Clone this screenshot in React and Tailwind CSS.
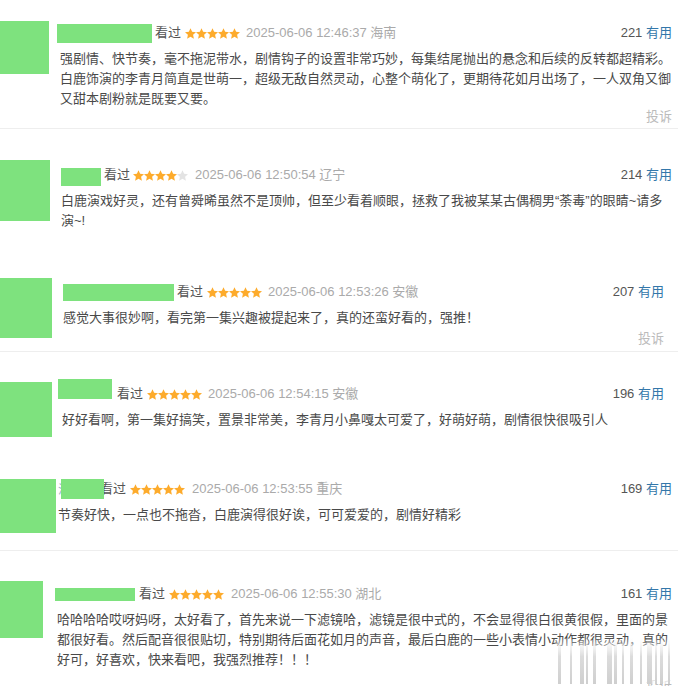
const comments = [
  {
    h: "h-[150px]",
    avatar: "mt-[21px] w-[49px] h-[53px]",
    col: "ml-[8px] mt-[23px] pr-[6px]",
    box: "w-[95px] h-[19px]",
    look: "ml-[3px]",
    starMl: "ml-[4px]",
    dateMl: "ml-[6px]",
    n: 5,
    date: "2025-06-06 12:46:37 海南",
    count: "221",
    bodyPl: "pl-[3px]",
    lines: [
      "强剧情、快节奏，毫不拖泥带水，剧情钩子的设置非常巧妙，每集结尾抛出的悬念和后续的反转都超精彩。",
      "白鹿饰演的李青月简直是世萌一，超级无敌自然灵动，心整个萌化了，更期待花如月出场了，一人双角又御",
      "又甜本剧粉就是既要又要。",
    ],
    report: "mt-0",
    sep: "mb-[21px]",
  },
  {
    h: "h-[118px]",
    avatar: "mt-[10px] w-[50px] h-[61px]",
    col: "ml-[11px] mt-[15px] pr-[6px]",
    box: "w-[40px] h-[18px] top-[2px]",
    look: "ml-[3px]",
    starMl: "ml-[3px]",
    dateMl: "ml-[7px]",
    n: 4,
    date: "2025-06-06 12:50:54 辽宁",
    count: "214",
    bodyPl: "pl-0",
    lines: [
      "白鹿演戏好灵，还有曾舜晞虽然不是顶帅，但至少看着顺眼，拯救了我被某某古偶稠男“荼毒”的眼睛~请多",
      "演~!",
    ],
  },
  {
    h: "h-[94px]",
    avatar: "mt-[10px] w-[52px] h-[60px]",
    col: "ml-[11px] mt-[14px] pr-[14px]",
    box: "w-[111px] h-[17px]",
    look: "ml-[3px]",
    starMl: "ml-[4px]",
    dateMl: "ml-[6px]",
    n: 5,
    date: "2025-06-06 12:53:26 安徽",
    count: "207",
    bodyPl: "pl-0",
    lines: ["感觉大事很妙啊，看完第一集兴趣被提起来了，真的还蛮好看的，强推！"],
    report: "mt-[3px]",
    sep: "mb-[10px]",
  },
  {
    h: "h-[104px]",
    avatar: "mt-[20px] w-[52px] h-[55px]",
    col: "ml-[6px] mt-[22px] pr-[14px]",
    box: "w-[54px] h-[20px] -top-[5px]",
    look: "ml-[5px]",
    starMl: "ml-[4px]",
    dateMl: "ml-[6px]",
    n: 5,
    date: "2025-06-06 12:54:15 安徽",
    count: "196",
    bodyPl: "pl-[4px]",
    lines: ["好好看啊，第一集好搞笑，置景非常美，李青月小鼻嘎太可爱了，好萌好萌，剧情很快很吸引人"],
  },
  {
    h: "h-[102px]",
    avatar: "mt-[13px] w-[56px] h-[54px]",
    col: "ml-[2px] mt-[13px] pr-[6px]",
    pre: true,
    box: "w-[43px] h-[20px]",
    look: "-ml-[4px]",
    starMl: "ml-[4px]",
    dateMl: "ml-[7px]",
    n: 5,
    date: "2025-06-06 12:53:55 重庆",
    count: "169",
    bodyPl: "pl-0",
    lines: ["节奏好快，一点也不拖沓，白鹿演得很好诶，可可爱爱的，剧情好精彩"],
    sep: "mb-[17px]",
  },
  {
    h: "h-[118px]",
    avatar: "mt-[13px] w-[43px] h-[57px]",
    col: "ml-[12px] mt-[16px] pr-[6px]",
    box: "w-[80px] h-[13px]",
    look: "ml-[4px]",
    starMl: "ml-[4px]",
    dateMl: "ml-[7px]",
    n: 5,
    date: "2025-06-06 12:55:30 湖北",
    count: "161",
    bodyPl: "pl-[2px]",
    lines: [
      "哈哈哈哈哎呀妈呀，太好看了，首先来说一下滤镜哈，滤镜是很中式的，不会显得很白很黄很假，里面的景",
      "都很好看。然后配音很很贴切，特别期待后面花如月的声音，最后白鹿的一些小表情小动作都很灵动，真的",
      "好可，好喜欢，快来看吧，我强烈推荐！！！",
    ],
    report: "mt-[9px]",
    mark: true,
  },
];

const starPath = "M12 1.8l3 6.6 7.2.8-5.4 4.9 1.5 7.1L12 17.6l-6.3 3.6 1.5-7.1L1.8 9.2 9 8.4z";

function Stars({ n, cls }) {
  return (
    <span className={`flex ${cls}`}>
      {[0, 1, 2, 3, 4].map((i) => (
        <svg key={i} width="11" height="11" viewBox="1.8 1.6 20.4 20">
          <path d={starPath} fill={i < n ? "#fdab2c" : "#e3e3e3"} />
        </svg>
      ))}
    </span>
  );
}

// washed-out stripes over the corner of the last comment
const bars = [[2, 3], [14, 2], [24, 4], [30, 2], [37, 3], [51, 5], [58, 3], [66, 2], [74, 3], [84, 2], [91, 5], [99, 2], [104, 3], [112, 2]];

function Comment({ c }) {
  return (
    <div className={`relative flex flex-col ${c.h}`}>
      <div className="flex items-start">
        <div className={`shrink-0 bg-[#7ee27e] ${c.avatar}`} />
        <div className={`flex-1 ${c.col}`}>
          <div className="flex h-[20px] items-center whitespace-nowrap text-[13px] leading-[20px]">
            {c.pre && <span className="inline-block w-[3px] overflow-hidden text-[#9bb5c9]">淡</span>}
            <div className={`relative z-10 shrink-0 bg-[#7ee27e] ${c.box}`} />
            <span className={`text-[#555] ${c.look}`}>看过</span>
            <Stars n={c.n} cls={c.starMl} />
            <span className={`text-[#aaa] ${c.dateMl}`}>{c.date}</span>
            <span className="ml-auto text-[#555]">
              {c.count} <span className="text-[#3377aa]">有用</span>
            </span>
          </div>
          <div className={`mt-[6px] whitespace-nowrap text-[13px] leading-[20px] text-[#494949] ${c.bodyPl}`}>
            {c.lines.map((l, i) => (
              <div key={i}>{l}</div>
            ))}
          </div>
          {c.report && <div className={`text-right text-[13px] leading-[16px] text-[#bbb] ${c.report}`}>投诉</div>}
        </div>
      </div>
      {c.sep && <div className={`mt-auto h-px bg-[#eeeeee] ${c.sep}`} />}
      {c.mark && (
        <svg className="absolute left-[556px] top-[70px]" width="116" height="46" viewBox="0 0 116 46">
          <defs>
            <linearGradient id="fade" x1="0" y1="0" x2="0" y2="1">
              <stop offset="0" stopColor="#ffffff" stopOpacity="0" />
              <stop offset="0.3" stopColor="#ffffff" stopOpacity="0.8" />
              <stop offset="1" stopColor="#ffffff" stopOpacity="0.6" />
            </linearGradient>
            <linearGradient id="bar" x1="0" y1="0" x2="0" y2="1">
              <stop offset="0" stopColor="#f0f0f0" stopOpacity="0" />
              <stop offset="0.4" stopColor="#dcdcdc" />
              <stop offset="1" stopColor="#cfcfcf" />
            </linearGradient>
          </defs>
          <rect x="0" y="0" width="116" height="46" fill="url(#fade)" />
          {bars.map(([x, w]) => (
            <rect key={x} x={x} y="0" width={w} height="46" fill="url(#bar)" />
          ))}
        </svg>
      )}
    </div>
  );
}

export default function App() {
  return (
    <div className="h-[686px] w-[678px] overflow-hidden bg-white font-['Liberation_Sans','Noto_Sans_CJK_SC',sans-serif]">
      {comments.map((c, i) => (
        <Comment key={i} c={c} />
      ))}
    </div>
  );
}
